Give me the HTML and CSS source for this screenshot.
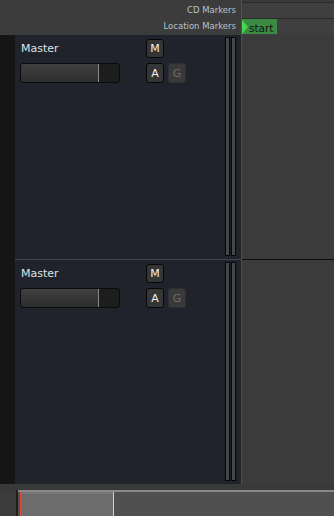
FILE: index.html
```html
<!DOCTYPE html>
<html lang="en">
<head>
  <meta charset="UTF-8">
  <title>Editor</title>
  <link rel="stylesheet" href="styles.css">
</head>
<body>

  <div class="editor">
    <div class="main">
      <div class="left">
        <div class="ruler-labels">
          <div class="ruler-label cd-label">CD Markers</div>
          <div class="ruler-label">Location Markers</div>
        </div>
        <div class="track-area">
          <div class="gutter"></div>
          <div class="track-headers">

            <div class="track-header first">
              <div class="strip">
                <div class="track-name">Master</div>
                <button class="btn">M</button>
                <div class="fader"><div class="fader-fill"></div></div>
                <button class="btn">A</button>
                <button class="btn off">G</button>
              </div>
              <div class="meters">
                <div class="meter"></div>
                <div class="meter"></div>
              </div>
            </div>

            <div class="track-header">
              <div class="strip">
                <div class="track-name">Master</div>
                <button class="btn">M</button>
                <div class="fader"><div class="fader-fill"></div></div>
                <button class="btn">A</button>
                <button class="btn off">G</button>
              </div>
              <div class="meters">
                <div class="meter"></div>
                <div class="meter"></div>
              </div>
            </div>

          </div>
        </div>
      </div>

      <div class="right">
        <div class="ruler-lanes">
          <div class="lane-row"></div>
          <div class="lane-row">
            <div class="marker"><span class="flag"></span><span class="marker-name">start</span></div>
          </div>
        </div>
        <div class="lane first"></div>
        <div class="lane"></div>
      </div>
    </div>

    <div class="summary">
      <div class="summary-side"></div>
      <div class="summary-edge"></div>
      <div class="summary-box">
        <div class="view"></div>
      </div>
    </div>
  </div>

</body>
</html>
```

FILE: styles.css
```css
body {
  margin: 0;
  background: #3a3a3a;
  font-family: 'DejaVu Sans', sans-serif;
}

.editor {
  width: 334px;
  height: 516px;
  display: flex;
  flex-direction: column;
  overflow: hidden;
}

.main {
  height: 484px;
  display: flex;
}

.left {
  width: 241px;
  display: flex;
  flex-direction: column;
}

.ruler-labels {
  height: 35px;
  background: #3c3c3c;
  display: flex;
  flex-direction: column;
  align-items: flex-end;
  padding: 2px 5px 0 0;
  box-sizing: border-box;
}

.ruler-label {
  height: 16px;
  line-height: 16px;
  font-size: 8.5px;
  color: #b7c2cf;
}

.track-area {
  flex: 1;
  display: flex;
}

.gutter {
  width: 15px;
  background: #151515;
}

.track-headers {
  flex: 1;
  display: flex;
  flex-direction: column;
  background: #20232b;
}

.track-header {
  height: 224px;
  display: flex;
  padding: 4px 5px 3px 5px;
  box-sizing: border-box;
}

.track-header.first {
  height: 225px;
  border-bottom: 1px solid #41454d;
}

.strip {
  display: grid;
  grid-template-columns: 126px 18px 18px;
  grid-template-rows: 19px 20px;
  row-gap: 5px;
  align-items: center;
}

.track-name {
  padding-left: 1px;
  font-size: 11px;
  color: #dde3ea;
}

.btn {
  grid-column: 2;
  width: 18px;
  height: 19px;
  padding: 0;
  border: 1px solid #070707;
  border-radius: 3px;
  background: #353535;
  color: #f0f0f0;
  font-family: 'DejaVu Sans', sans-serif;
  font-size: 11px;
  line-height: 17px;
  text-align: center;
}

.strip .btn:nth-of-type(2) {
  height: 20px;
}

.btn.off {
  grid-column: 3;
  margin-left: 4px;
  width: 18px;
  height: 20px;
  background: #393939;
  border-color: #2c2f35;
  color: #6c6c6c;
}

.fader {
  grid-column: 1;
  width: 100px;
  height: 20px;
  box-sizing: border-box;
  border: 1px solid #0b0b0b;
  border-radius: 3px;
  background: #1d1d1d;
  overflow: hidden;
}

.fader-fill {
  width: 77px;
  height: 100%;
  background: linear-gradient(#404040, #2d2d2d);
  border-right: 1px solid #8a8a8a;
}

.meters {
  margin-left: auto;
  margin-top: -2px;
  display: flex;
  gap: 1px;
}

.meter {
  width: 5px;
  box-sizing: border-box;
  border: 1px solid #050505;
  background: #474747;
}

.right {
  flex: 1;
  display: flex;
  flex-direction: column;
  border-left: 1px solid #d3171c;
  background: #3b3b3b;
}

.ruler-lanes {
  height: 35px;
  padding-top: 2px;
  box-sizing: border-box;
  background: #3a3a3a;
}

.lane-row {
  height: 16px;
  border-top: 1px solid #2a2a2a;
  background: #3f3f3f;
}

.lane-row:first-child {
  height: 15px;
}

.marker {
  width: 35px;
  height: 15px;
  display: flex;
  align-items: center;
  background: #3d8a45;
}

.flag {
  width: 0;
  height: 0;
  border-top: 7px solid transparent;
  border-bottom: 7px solid transparent;
  border-left: 6px solid #43d64e;
}

.marker-name {
  margin-left: 1px;
  margin-top: 3px;
  font-size: 10.5px;
  color: #0d140d;
}

.lane {
  height: 224px;
}

.lane.first {
  height: 225px;
  border-bottom: 1px solid #0e0e0e;
  box-sizing: border-box;
}

.summary {
  flex: 1;
  display: flex;
  padding-top: 6px;
  background: #393939;
}

.summary-side {
  width: 16px;
  background: #3b3b3b;
}

.summary-edge {
  width: 2px;
  background: #1f1f1f;
}

.summary-box {
  flex: 1;
  display: flex;
  padding-left: 2px;
  border-top: 2px solid #8a8a8a;
  background: #505050;
}

.view {
  width: 94px;
  box-sizing: border-box;
  border-left: 1px solid #e24a36;
  border-right: 1px solid #e8e23f;
  background: linear-gradient(#767676 0, #767676 2px, #6c6c6c 2px);
}
```
